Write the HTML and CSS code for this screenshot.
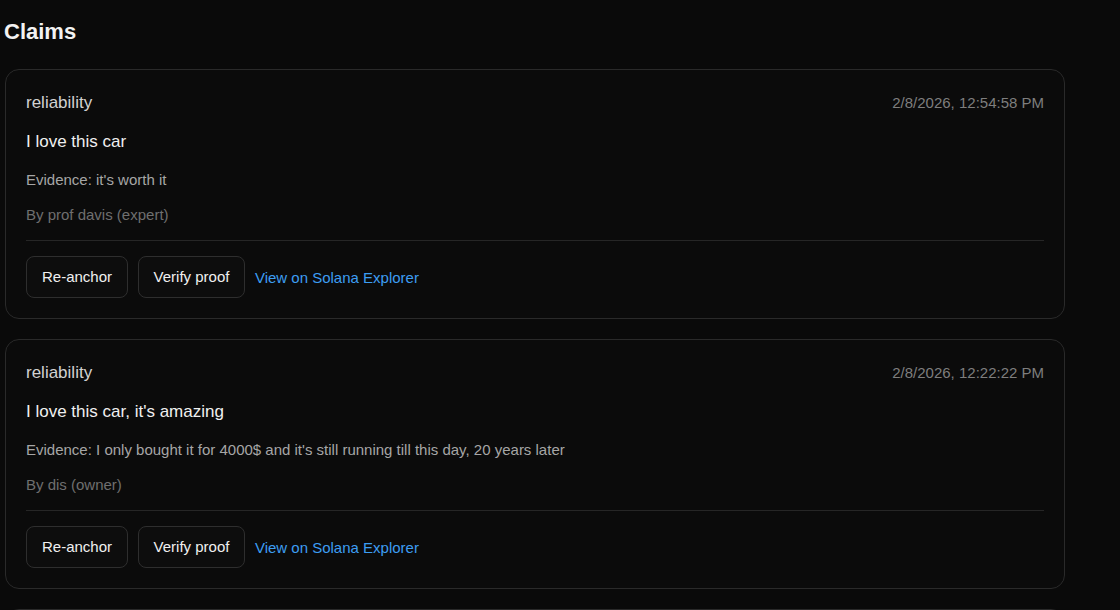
FILE: index.html
```html
<!DOCTYPE html>
<html lang="en">
<head>
    <meta charset="UTF-8">
    <meta name="viewport" content="width=device-width, initial-scale=1.0">
    <title>Claims</title>
    <link rel="stylesheet" href="styles.css">
</head>
<body>

    <div class="claims">
        <h2 class="claims-title">Claims</h2>

        <div class="claim-card">
            <div class="claim-head">
                <span class="claim-category">reliability</span>
                <span class="claim-date">2/8/2026, 12:54:58 PM</span>
            </div>
            <div class="claim-text">I love this car</div>
            <div class="claim-evidence">Evidence: it's worth it</div>
            <div class="claim-author">By prof davis (expert)</div>
            <div class="claim-actions">
                <button class="btn">Re-anchor</button>
                <button class="btn btn-verify">Verify proof</button>
                <a class="explorer-link" href="#">View on Solana Explorer</a>
            </div>
        </div>

        <div class="claim-card">
            <div class="claim-head">
                <span class="claim-category">reliability</span>
                <span class="claim-date">2/8/2026, 12:22:22 PM</span>
            </div>
            <div class="claim-text">I love this car, it's amazing</div>
            <div class="claim-evidence">Evidence: I only bought it for 4000$ and it's still running till this day, 20 years later</div>
            <div class="claim-author">By dis (owner)</div>
            <div class="claim-actions">
                <button class="btn">Re-anchor</button>
                <button class="btn btn-verify">Verify proof</button>
                <a class="explorer-link" href="#">View on Solana Explorer</a>
            </div>
        </div>

        <!-- next card, only its top edge is in view -->
        <div class="claim-card claim-card-peek"></div>
    </div>

</body>
</html>
```

FILE: styles.css
```css
html, body {
    margin: 0;
    padding: 0;
    height: 100%;
    overflow: hidden;
    background-color: #0a0a0a;
}
body {
    font-family: "Liberation Sans", Arial, sans-serif;
    color: #ededed;
}
.claims {
    width: 1060px;
    padding: 0 5px;
}
.claims-title {
    font-size: 22px;
    font-weight: bold;
    color: #f2f2f2;
    margin: 19px 0 24px -1px;
}
.claim-card {
    border: 1px solid #2a2a2a;
    border-radius: 14px;
    background-color: #0b0b0b;
    padding: 20px;
    margin-bottom: 20px;
}
.claim-card-peek {
    height: 200px;
}
.claim-head {
    display: flex;
    justify-content: space-between;
    align-items: baseline;
    line-height: 26px;
}
.claim-category {
    font-size: 17px;
    color: #d2d2d2;
}
.claim-date {
    font-size: 15px;
    color: #7e7e7e;
}
.claim-text {
    font-size: 17px;
    line-height: 22px;
    color: #f0f0f0;
    margin-top: 15px;
}
.claim-evidence {
    font-size: 15px;
    line-height: 22px;
    color: #a6a6a6;
    margin-top: 16px;
}
.claim-author {
    font-size: 15px;
    line-height: 22px;
    color: #6f6f6f;
    margin-top: 13px;
}
.claim-actions {
    display: flex;
    align-items: center;
    gap: 10px;
    border-top: 1px solid #262626;
    margin-top: 14px;
    padding-top: 15px;
}
.btn {
    font-family: "Liberation Sans", Arial, sans-serif;
    font-size: 15px;
    color: #f0f0f0;
    background-color: #0d0d0d;
    border: 1px solid #2e2e2e;
    border-radius: 8px;
    padding: 11px 15px 12px;
    line-height: normal;
    cursor: pointer;
}
.btn-verify {
    padding-left: 14.5px;
    padding-right: 14.5px;
}
.explorer-link {
    font-size: 15px;
    color: #3d9df2;
    text-decoration: none;
}
```
